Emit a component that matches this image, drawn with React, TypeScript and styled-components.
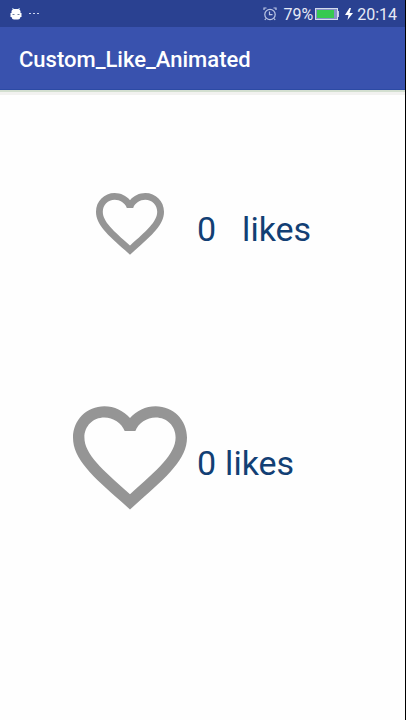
import React, { useState } from "react";
import styled, { createGlobalStyle } from "styled-components";

const GlobalStyle = createGlobalStyle`
  *, *::before, *::after { box-sizing: border-box; }
  body { margin: 0; background: #fefefe; font-family: Roboto, sans-serif; }
`;

const Screen = styled.div`
  min-height: 100vh;
  display: flex;
  flex-direction: column;
  background: #fefefe;
  border-right: 1px solid #000;
`;

const StatusBar = styled.div`
  display: flex;
  align-items: center;
  justify-content: space-between;
  height: 27px;
  padding: 0 8px 0 10px;
  background: #2a4191;
  color: #e6eaf6;
`;

const StatusGroup = styled.div`
  display: flex;
  align-items: center;
`;

const StatusText = styled.span`
  padding: 2px 2px 0 0;
  font-size: 16px;
  line-height: 28px;

  &:last-child { padding-right: 0; }
`;

const Glyph = styled.svg<{ $gap?: number }>`
  display: block;
  flex: none;
  margin-right: ${(p) => p.$gap ?? 0}px;
`;

const AppBar = styled.header`
  display: flex;
  align-items: center;
  height: 63px;
  padding: 4px 19px 0;
  background: #3952ae;
  border-bottom: 1px solid #2c4aa4;
  box-shadow: 0 2px 0 #d3dfd0, 0 5px 0 #f2f2f0;
`;

const Title = styled.h1`
  margin: 0;
  color: #fff;
  font-size: 22px;
  font-weight: 500;
  line-height: 28px;
`;

const Content = styled.main`
  display: flex;
  flex-direction: column;
  padding-top: 103px;
  gap: 151px;
`;

const LikeRow = styled.section`
  display: grid;
  grid-template-columns: 197px 1fr;
  align-items: center;
`;

const LikeButton = styled.button<{ $inset: number }>`
  display: block;
  justify-self: end;
  margin-right: ${(p) => p.$inset}px;
  padding: 0;
  border: 0;
  background: none;
  color: #959595;
  cursor: pointer;

  &[aria-pressed="true"] { color: #e53935; }
`;

const Count = styled.p<{ $gap: number }>`
  display: flex;
  gap: ${(p) => p.$gap}px;
  margin: 0;
  padding-top: 10px;
  color: #123f74;
  font-size: 34px;
  line-height: 40px;
`;

function AndroidIcon() {
  return (
    <Glyph width="14" height="14" viewBox="0 0 14 14" $gap={4} aria-hidden="true">
      <path d="M2.500 1L4 3M9.500 1L8 3" stroke="#c3e3f3" strokeWidth="1" />
      <path d="M1.500 4Q2 2 4 2h4q2 0 2.500 2v2H11.500v4h-1Q10 12.500 8 12.500H4Q2 12.500 1.500 10H0.500V6h1z" fill="#fff" />
      <path d="M2.500 7.500h2M7.500 7.500h2" stroke="#71809f" />
    </Glyph>
  );
}

function DotsIcon() {
  return (
    <Glyph width="12" height="4" viewBox="0 0 12 4" fill="#cbd4ee" aria-hidden="true">
      <rect x="1" y="1" width="2" height="1" />
      <rect x="5" y="1" width="2" height="1" />
      <rect x="9" y="1" width="2" height="1" />
    </Glyph>
  );
}

function AlarmIcon() {
  return (
    <Glyph
      width="14" height="14" viewBox="0 0 14 14" $gap={6}
      fill="none" stroke="#bdc8e6" strokeWidth="1.200" aria-hidden="true"
    >
      <circle cx="7" cy="7.500" r="5.200" />
      <path d="M1 3V1h2.500M10.500 1H13v2M3 11.500l-1.200 1.500M11 11.500l1.200 1.500M6.500 4.500v3.200h3" />
    </Glyph>
  );
}

function BatteryIcon() {
  return (
    <Glyph width="25" height="12" viewBox="0 0 25 12" $gap={5} aria-hidden="true">
      <rect x="0.500" y="0.500" width="22" height="11" fill="#8791c7" stroke="#d3dcec" />
      <rect x="2" y="2" width="17" height="8" fill="#37c950" />
      <path d="M23.500 3v6" stroke="#c5cfe8" />
    </Glyph>
  );
}

function BoltIcon() {
  return (
    <Glyph width="8" height="12" viewBox="0 0 8 12" $gap={4} fill="#fff" aria-hidden="true">
      <path d="M4.500 0L0 7h3.500L2.500 12 8 5H4.500L6 0z" />
    </Glyph>
  );
}

function HeartIcon({ width, height }: { width: number; height: number }) {
  return (
    <Glyph width={width} height={height} viewBox="2 3 20 18.2" fill="currentColor" aria-hidden="true">
      <path d="M16.500 3c-1.740 0-3.410.81-4.500 2.090C10.910 3.810 9.240 3 7.500 3 4.420 3 2 5.420 2 8.500c0 3.780 3.400 6.760 8.550 11.340L12 21.150l1.450-1.320C18.600 15.260 22 12.280 22 8.500 22 5.420 19.580 3 16.500 3zm-4.400 15.350l-.1.1-.1-.1C7.140 14.140 4 11.390 4 8.500 4 6.500 5.500 5 7.500 5c1.540 0 3.040.99 3.570 2.360h1.870C13.460 5.990 14.960 5 16.500 5c2 0 3.500 1.500 3.500 3.500 0 2.890-3.140 5.640-7.900 9.850z" />
    </Glyph>
  );
}

function Like({ large = false }: { large?: boolean }) {
  const [liked, setLiked] = useState(false);
  return (
    <LikeRow>
      <LikeButton
        type="button"
        aria-label="Like"
        aria-pressed={liked}
        $inset={large ? 10 : 33}
        onClick={() => setLiked(!liked)}
      >
        <HeartIcon width={large ? 114 : 68} height={large ? 104 : 62} />
      </LikeButton>
      <Count $gap={large ? 9 : 26}>
        <span>{liked ? 1 : 0}</span>
        <span>likes</span>
      </Count>
    </LikeRow>
  );
}

export default function App() {
  return (
    <>
      <GlobalStyle />
      <Screen>
        <StatusBar>
          <StatusGroup>
            <AndroidIcon />
            <DotsIcon />
          </StatusGroup>
          <StatusGroup>
            <AlarmIcon />
            <StatusText>79%</StatusText>
            <BatteryIcon />
            <BoltIcon />
            <StatusText>20:14</StatusText>
          </StatusGroup>
        </StatusBar>
        <AppBar>
          <Title>Custom_Like_Animated</Title>
        </AppBar>
        <Content>
          <Like />
          <Like large />
        </Content>
      </Screen>
    </>
  );
}
